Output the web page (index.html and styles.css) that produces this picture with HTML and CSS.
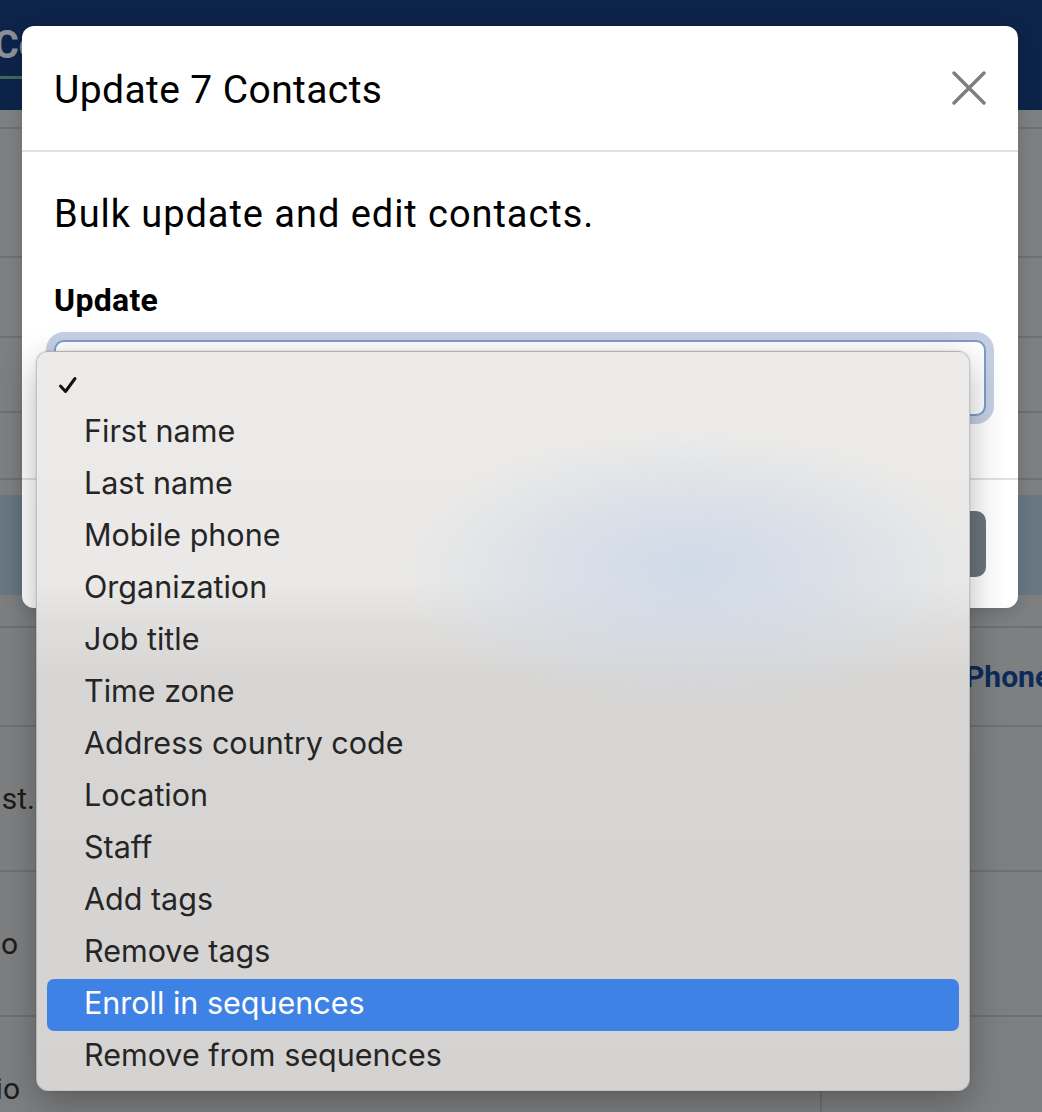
FILE: index.html
```html
<!DOCTYPE html>
<html lang="en">
<head>
<meta charset="utf-8">
<title>Update 7 Contacts</title>
<link rel="stylesheet" href="styles.css">
</head>
<body>
<div class="page">
  <header class="topbar">
    <span class="tab">Contacts</span>
  </header>
  <div class="strip strip-a"></div>
  <div class="strip strip-b"></div>
  <div class="strip strip-c"></div>
  <div class="strip strip-d"></div>
  <div class="strip strip-e"></div>
  <div class="strip strip-f"></div>
  <div class="strip band"></div>
  <div class="strip strip-g"></div>
  <div class="trow thead">
    <div class="cell c1"></div>
    <div class="cell c2"></div>
    <div class="cell c3"></div>
    <div class="cell c4"><span class="th">Phone</span></div>
  </div>
  <div class="trow">
    <div class="cell c1 r1">st.</div>
    <div class="cell c2"></div>
    <div class="cell c3"></div>
    <div class="cell c4"></div>
  </div>
  <div class="trow">
    <div class="cell c1 r2">o</div>
    <div class="cell c2"></div>
    <div class="cell c3"></div>
    <div class="cell c4"></div>
  </div>
  <div class="trow">
    <div class="cell c1 r3">io</div>
    <div class="cell c2"></div>
    <div class="cell c3"><span class="dash">–</span></div>
    <div class="cell c4"></div>
  </div>
</div>

<div class="modal">
  <div class="modal-header">
    <h5 class="modal-title">Update 7 Contacts</h5>
    <button class="btn-close" type="button" aria-label="Close">
      <svg width="34" height="34" viewBox="0 0 34 34"><path d="M2 2 L32 32 M32 2 L2 32" stroke="#7d7d7d" stroke-width="3.4" stroke-linecap="round" fill="none"/></svg>
    </button>
  </div>
  <div class="modal-body">
    <p class="lead">Bulk update and edit contacts.</p>
    <label class="form-label">Update</label>
    <div class="form-select"></div>
  </div>
  <div class="modal-footer">
    <button class="btn-secondary" type="button">Continue</button>
  </div>
</div>

<div class="menu">
  <div class="mi checked"><svg class="check" width="20" height="18" viewBox="0 0 20 18"><path d="M2.5 10 L7.5 15.5 L17 2.5" stroke="#111" stroke-width="3" stroke-linecap="round" stroke-linejoin="round" fill="none"/></svg></div>
  <div class="mi">First name</div>
  <div class="mi">Last name</div>
  <div class="mi">Mobile phone</div>
  <div class="mi">Organization</div>
  <div class="mi">Job title</div>
  <div class="mi">Time zone</div>
  <div class="mi">Address country code</div>
  <div class="mi">Location</div>
  <div class="mi">Staff</div>
  <div class="mi">Add tags</div>
  <div class="mi">Remove tags</div>
  <div class="mi active">Enroll in sequences</div>
  <div class="mi">Remove from sequences</div>
</div>
</body>
</html>
```

FILE: styles.css
```css
* { box-sizing: border-box; }
html, body { margin: 0; padding: 0; }
body {
  width: 1042px;
  height: 1112px;
  overflow: hidden;
  background: #7e7f80;
  font-family: Roboto, "Noto Sans", sans-serif;
  position: relative;
}

.page { width: 1042px; }

.topbar {
  height: 110px;
  background: #0d2349;
  display: flex;
  align-items: flex-start;
}
.tab {
  margin-left: -6px;
  margin-top: 22px;
  height: 57px;
  font-size: 38px;
  font-weight: 700;
  color: #8a8f98;
  border-bottom: 3px solid #3d6a5d;
  line-height: 46px;
}

.strip { border-bottom: 2px solid #6f7071; }
.strip-a { height: 19px; }
.strip-b { height: 129px; }
.strip-c { height: 80px; }
.strip-d { height: 75px; }
.strip-e { height: 67px; }
.strip-f { height: 15px; border-bottom: 0; }
.band { height: 100px; background: #687782; border-bottom: 0; }
.strip-g { height: 33px; }

.trow {
  display: grid;
  grid-template-columns: 40px 780px 111px 1fr;
  height: 145px;
  border-bottom: 2px solid #6f7071;
}
.thead { height: 99px; }
.cell {
  display: flex;
  align-items: center;
  padding-left: 34px;
  font-size: 30px;
  color: #1c1c1c;
}
.c1 { padding-left: 0; justify-content: flex-end; overflow: hidden; white-space: nowrap; }
.r1 { padding-right: 5px; }
.r2 { padding-right: 22px; }
.r3 { padding-right: 20px; }
.c3 { border-left: 2px solid #6f7071; }
.thead .c3 { border-left: 0; }
.c4 { overflow: hidden; }
.th { font-weight: 700; color: #0c2a5a; white-space: nowrap; }
.dash { color: #111; }

/* Modal */
.modal {
  position: absolute;
  left: 22px;
  top: 26px;
  width: 996px;
  background: #fff;
  border-radius: 12px;
  box-shadow: 0 4px 18px rgba(0,0,0,0.15);
  color: #000;
}
.modal-header {
  display: flex;
  align-items: center;
  justify-content: space-between;
  padding: 32px;
  border-bottom: 2px solid #dee2e6;
}
.modal-title {
  margin: 2px 0 -2px;
  font-size: 39px;
  font-weight: 400;
  line-height: 60px;
  letter-spacing: 0.4px;
}
.btn-close {
  border: 0;
  background: none;
  padding: 0;
  width: 34px;
  height: 34px;
  display: flex;
}
.modal-body { padding: 32px 32px 32px; }
.lead {
  margin: 0 0 32px;
  font-size: 38px;
  line-height: 60px;
  font-weight: 400;
  letter-spacing: 0.95px;
}
.form-label {
  display: block;
  font-size: 32px;
  font-weight: 700;
  line-height: 48px;
  margin-bottom: 16px;
  letter-spacing: 0.3px;
}
.form-select {
  height: 76px;
  border: 2px solid #7f9bc9;
  border-radius: 10px;
  box-shadow: 0 0 0 8px #c5d0e4;
  margin-bottom: 32px;
  background: #fff;
}
.modal-footer {
  display: flex;
  justify-content: flex-end;
  padding: 31px 32px 31px;
  border-top: 2px solid #dee2e6;
  margin-top: -2px;
}
.btn-secondary {
  height: 66px;
  padding: 0 28px;
  border: 0;
  border-radius: 10px;
  background: #6c757d;
  color: #fff;
  font-family: inherit;
  font-size: 30px;
}

/* Native-style popup menu */
.menu {
  position: absolute;
  left: 36px;
  top: 351px;
  width: 934px;
  height: 740px;
  padding: 3px 10px 9px;
  border-radius: 12px;
  border: 1px solid rgba(0,0,0,0.16);
  box-shadow: 0 12px 36px rgba(0,0,0,0.28), 0 0 2px rgba(0,0,0,0.2);
  background:
    radial-gradient(ellipse 290px 135px at 655px 215px, rgba(207,217,232,0.95) 0%, rgba(207,217,232,0.6) 45%, rgba(207,217,232,0) 100%),
    linear-gradient(to bottom, #ecebe9 0%, #eae9e7 31%, #dfdedd 37%, #d7d6d5 44%, #d4d3d2 100%);
  font-family: Inter, "Liberation Sans", sans-serif;
}
.mi {
  height: 52px;
  display: flex;
  align-items: center;
  padding-left: 37px;
  padding-bottom: 5px;
  font-size: 30.5px;
  color: #252525;
  border-radius: 7px;
  letter-spacing: 0;
}
.mi.checked { padding-left: 11px; padding-bottom: 0; }
.check { margin-top: 8px; }
.mi.active { background: #3f82e5; color: #fff; }
```
